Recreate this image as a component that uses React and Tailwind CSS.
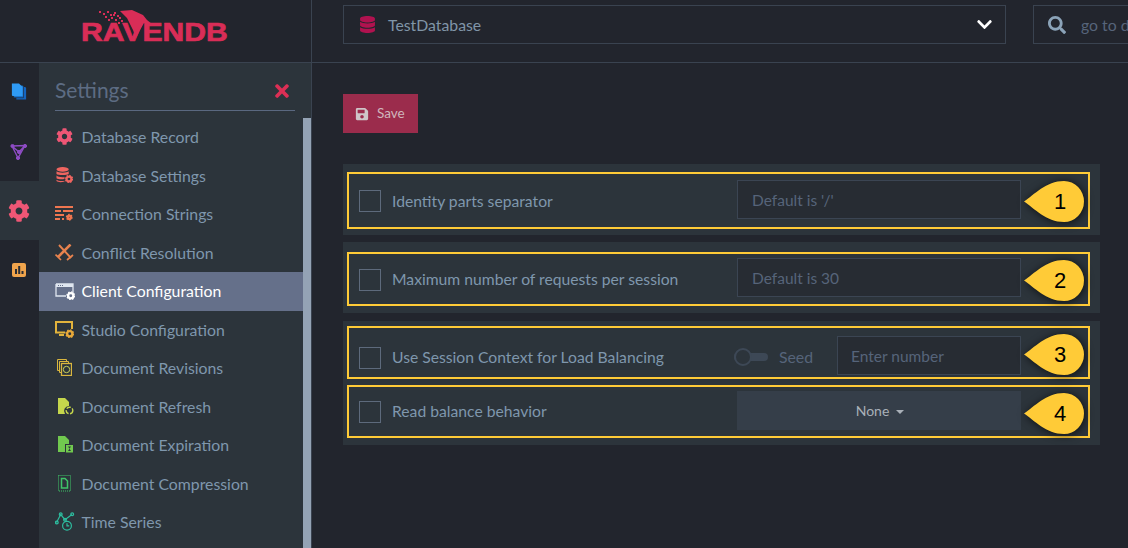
import { FaChevronDown, FaCog, FaDatabase, FaSave, FaSearch, FaTimes } from "react-icons/fa";

function Logo() {
  return (
    <svg width="150" height="36" viewBox="0 0 150 36" fill="#d92d57" className="overflow-visible">
      <path d="M41 3 L53 2 L64 7 L68 12 L73 16 L65 15 L61 22 L57 30 L54 22 L48 10 Z" />
      {[[20,3],[24,5],[28,3],[31,6],[35,4],[38,7],[26,8],[32,9],[36,11],[40,9],[42,12],[39,14],[44,15],[34,6],[29,11]].map(([x, y]) => (
        <rect key={`${x}-${y}`} x={x} y={y} width="2" height="2" />
      ))}
      <text x="1.8" y="33" transform="scale(1.16 1)" fontFamily="'Liberation Sans', sans-serif" fontWeight="700" fontSize="26" stroke="#d92d57" strokeWidth="0.7">
        RAVENDB
      </text>
    </svg>
  );
}

function DocsIcon() {
  return (
    <svg width="16" height="19" viewBox="0 0 18 20" className="mb-[3px]">
      <path d="M6 5h10l1 1v13H6z" fill="#1565c0" />
      <path d="M3 3h10l1 1v13H3z" fill="#1976d2" stroke="#22252d" strokeWidth="0.7" />
      <path d="M1 1h8l4 4v10H2a1 1 0 0 1-1-1z" fill="#2f9bf5" />
    </svg>
  );
}

function VectorIcon() {
  return (
    <svg width="17" height="16" viewBox="0 0 17 16" fill="#8e4cc4" stroke="#8e4cc4">
      <path d="M2 2 L15 1.5 L8 14 Z M2 2 L9 8 L15 1.5" fill="none" strokeWidth="1.4" />
      <circle cx="2.5" cy="2" r="1.6" />
      <circle cx="15" cy="2" r="1.6" />
      <circle cx="8" cy="14" r="1.6" />
      <circle cx="9" cy="8" r="1.6" />
    </svg>
  );
}

function StatsIcon() {
  return (
    <svg width="14" height="14" viewBox="0 0 14 14">
      <rect width="14" height="14" rx="2" fill="#f0a44c" />
      <path d="M3 6h2v5H3zM6.2 3h2v8h-2zM9.5 8h2v3h-2z" fill="#2a2d33" />
    </svg>
  );
}

function TinyGear({ x, y, size, color }) {
  return (
    <g transform={`translate(${x} ${y})`}>
      <circle cx={size / 2} cy={size / 2} r={size / 2 - 1.6} fill="none" stroke={color} strokeWidth="2.4" />
      <circle cx={size / 2} cy={size / 2} r={size / 2 - 0.4} fill="none" stroke={color} strokeWidth="1.2" strokeDasharray="1.5 1.5" />
    </g>
  );
}

function DbSettingsIcon() {
  return (
    <svg width="17" height="16" viewBox="0 0 18 17" fill="#ef6560">
      <ellipse cx="7" cy="2.5" rx="6.5" ry="2.5" />
      <path d="M.5 4.5C2 6.5 12 6.5 13.5 4.5V7.5C12 9 2 9 .5 7.5ZM.5 9C2 11 8 11 9 10.5V12.5C7 13.5 2 13 .5 12ZM.5 13.5C2 15 7 15 9 14.5V15.5C6 16.5 2 16.5.5 15Z" />
      <TinyGear x={9.5} y={8.5} size={8.5} color="#ef6560" />
    </svg>
  );
}

function ConnectionIcon() {
  return (
    <svg width="18" height="15" viewBox="0 0 18 15" fill="#ef7650">
      <path d="M0 0h18v2H0zM0 4h6v2H0zM8 4h10v2H8zM0 8h9v2H0zM0 12h5v2H0zM7 12h2v2H7z" />
      <TinyGear x={11} y={8} size={6.5} color="#ef7650" />
    </svg>
  );
}

function ConflictIcon() {
  return (
    <svg width="19" height="17" viewBox="0 0 19 17" fill="none" stroke="#e8834e" strokeWidth="1.5">
      <path d="M15.5 0.5 L3 13" strokeWidth="2.6" />
      <path d="M4 1 L16 14" strokeWidth="1.9" />
      <path d="M0.5 10.5 L6 16 M12 16 L18 11" strokeWidth="1.7" />
    </svg>
  );
}

function ClientIcon() {
  return (
    <svg width="20" height="17" viewBox="0 0 20 17" fill="none">
      <path d="M1 1h17v9M1 1v12h10" stroke="#dfe6f0" strokeWidth="1.3" />
      <path d="M1 1h17v3H1z" fill="#dfe6f0" />
      <path d="M3 2h1v1H3zM5 2h1v1H5zM7 2h1v1H7z" fill="#65708a" />
      <TinyGear x={11.5} y={8.5} size={8.5} color="#ffffff" />
    </svg>
  );
}

function StudioIcon() {
  return (
    <svg width="19" height="17" viewBox="0 0 19 17" fill="none">
      <path d="M10 11.5H1V1h16v7" stroke="#e2b33c" strokeWidth="2" />
      <path d="M4 13h5v2H4z" fill="#e2b33c" />
      <TinyGear x={10.5} y={8.5} size={8.5} color="#e8a93a" />
    </svg>
  );
}

function RevisionsIcon() {
  return (
    <svg width="15" height="17" viewBox="0 0 15 17" fill="none" stroke="#d9b63f" strokeWidth="1">
      <path d="M.5.5h9v2M.5.5v11h2M2.5 2.5h9v2M2.5 2.5v11h2" />
      <rect x="4.5" y="4.5" width="10" height="12" strokeWidth="1.3" />
      <circle cx="9.5" cy="10.5" r="3.2" stroke="#c9cf58" />
    </svg>
  );
}

function RefreshIcon() {
  return (
    <svg width="16" height="17" viewBox="0 0 16 17">
      <path d="M0 0h7l4 4v4a5 5 0 0 0-4 8H0z" fill="#c5d64c" />
      <circle cx="11.5" cy="12.5" r="3.3" fill="none" stroke="#c5d64c" strokeWidth="1.4" strokeDasharray="4.5 1.5" />
    </svg>
  );
}

function ExpirationIcon() {
  return (
    <svg width="15" height="17" viewBox="0 0 15 17">
      <path d="M0 0h7l4 4v4H7v8H0z" fill="#71c94f" />
      <path d="M8 9h7v7.5H8z" fill="#71c94f" />
      <path d="M10 10.5h3l-1.5 2.2 1.5 2.3h-3l1.5-2.3z" fill="#2c343b" />
    </svg>
  );
}

function CompressionIcon() {
  return (
    <svg width="13" height="17" viewBox="0 0 13 17" fill="none" stroke="#3fc468">
      <rect x="0.5" y="0.5" width="12" height="15.5" strokeDasharray="1 1" />
      <path d="M3.5 3.5h3.5l2.5 2.5v7h-6z" strokeWidth="1.5" />
    </svg>
  );
}

function SeriesIcon() {
  return (
    <svg width="20" height="19" viewBox="0 0 20 19" fill="none" stroke="#2dbd9f" strokeWidth="1.2">
      <path d="M1.5 10.5 L5.7 2.5 L10 7.7 L17 2.5" />
      <circle cx="1.8" cy="10.5" r="1.4" />
      <circle cx="5.7" cy="2.2" r="1.4" />
      <circle cx="10" cy="7.7" r="1.4" />
      <circle cx="17.2" cy="2.2" r="1.4" />
      <circle cx="12" cy="13.7" r="4.4" />
      <path d="M12 11.2v2.7h2.2" />
    </svg>
  );
}

const menu = [
  { label: "Database Record", icon: <FaCog className="ml-[1px] text-[17px] text-[#ef5675]" /> },
  { label: "Database Settings", icon: <span className="ml-[1px] flex"><DbSettingsIcon /></span> },
  { label: "Connection Strings", icon: <ConnectionIcon /> },
  { label: "Conflict Resolution", icon: <ConflictIcon /> },
  { label: "Client Configuration", icon: <ClientIcon />, active: true },
  { label: "Studio Configuration", icon: <StudioIcon /> },
  { label: "Document Revisions", icon: <span className="ml-[2px] flex"><RevisionsIcon /></span> },
  { label: "Document Refresh", icon: <span className="ml-[3px] flex"><RefreshIcon /></span> },
  { label: "Document Expiration", icon: <span className="ml-[3px] flex"><ExpirationIcon /></span> },
  { label: "Document Compression", icon: <span className="ml-[3px] flex"><CompressionIcon /></span> },
  { label: "Time Series", icon: <SeriesIcon /> },
];

function Callout({ n, className }) {
  return (
    <div className={`relative ml-[3px] h-[41px] w-[60px] shrink-0 ${className}`}>
      <svg width="60" height="41" viewBox="0 0 60 41" className="drop-shadow-[1px_1px_4px_rgba(0,0,0,0.7)]">
        <path d="M0 20.5 C10 14 22 0 40 0 A20 20.5 0 0 1 40 41 C22 41 10 27 0 20.5 Z" fill="#ffcb37" />
      </svg>
      <span className="absolute inset-0 flex items-center justify-center pl-[12px] font-['Liberation_Sans',sans-serif] text-[22px] text-black">
        {n}
      </span>
    </div>
  );
}

function TextBox({ placeholder, className }) {
  return (
    <div className={`flex h-[39px] items-center border border-[#3b4553] bg-[#272c33] pt-[2px] text-[15.5px] text-[#56647a] ${className}`}>
      {placeholder}
    </div>
  );
}

function Row({ label, n, boxClass, checkClass, labelClass, calloutClass, children }) {
  return (
    <div className={`mr-[6px] flex items-center border-2 border-[#ffcb37] pl-[10px] ${boxClass}`}>
      <span className={`h-[22px] w-[22px] shrink-0 border border-[#5d6a7c] ${checkClass}`} />
      <span className={`ml-[11px] flex-1 text-[15.7px] text-[#7f97ad] ${labelClass}`}>{label}</span>
      {children}
      <Callout n={n} className={calloutClass} />
      <span className="w-[4px] shrink-0" />
    </div>
  );
}

export default function App() {
  return (
    <div className="flex h-[548px] w-[1128px] flex-col overflow-hidden bg-[#22252d] font-['Lato',sans-serif]">
      <header className="flex h-[63px] shrink-0 border-b border-[#3a4350]">
        <div className="flex w-[312px] shrink-0 items-center justify-center border-r border-[#3a4350] pb-[10px] pr-[3px]">
          <Logo />
        </div>
        <div className="flex flex-1 items-start gap-[27px] pl-[31px] pt-[5px]">
          <div className="flex h-[39px] w-[663px] shrink-0 items-center border border-[#3a4350] pl-[15px] pr-[12px] text-[15.8px] text-[#8095a8]">
            <FaDatabase className="text-[17px] text-[#b0124f]" />
            <span className="ml-[12px] flex-1">TestDatabase</span>
            <FaChevronDown className="text-[17px] text-white" />
          </div>
          <div className="flex h-[39px] flex-1 items-center overflow-hidden whitespace-nowrap border border-r-0 border-[#3a4350] pl-[14px] text-[15.8px] text-[#56647a]">
            <FaSearch className="shrink-0 text-[18px] text-[#8ba3b8]" />
            <span className="ml-[15px]">go to document</span>
          </div>
        </div>
      </header>

      <div className="flex min-h-0 flex-1">
        <nav className="w-[39px] shrink-0">
          <div className="flex h-[59px] items-center justify-center pr-[2px] pt-[1px]"><DocsIcon /></div>
          <div className="flex h-[59px] items-center justify-center pr-[2px] pt-[1px]"><VectorIcon /></div>
          <div className="flex h-[59px] items-center justify-center bg-[#2c343b] pr-[2px] pt-[1px]">
            <FaCog className="text-[22px] text-[#ef5675]" />
          </div>
          <div className="flex h-[59px] items-center justify-center pr-[2px] pt-[1px]"><StatsIcon /></div>
        </nav>

        <aside className="flex w-[273px] shrink-0 flex-col border-r border-[#3a4350] bg-[#2c343b]">
          <div className="mx-[16px] flex h-[48px] shrink-0 items-center justify-between border-b border-[#5a6880] pr-[3px] pt-[7px]">
            <span className="text-[21px] text-[#5d6c83]">Settings</span>
            <FaTimes className="mt-[2px] text-[20px] text-[#dc2f55]" />
          </div>
          <div className="flex min-h-0 flex-1">
            <ul className="flex-1 pt-[6.7px]">
              {menu.map((item) => (
                <li
                  key={item.label}
                  className={`flex items-center pl-[16px] text-[15.8px] ${item.active ? "mb-[-0.5px] h-[39px] bg-[#65708a] text-white" : "h-[38.5px] text-[#7f97ad]"}`}
                >
                  <span className="flex w-[26.5px] shrink-0 items-center">{item.icon}</span>
                  {item.label}
                </li>
              ))}
            </ul>
            <div className="mt-[7px] w-[8px] shrink-0 bg-[#94a3b5]" />
          </div>
        </aside>

        <main className="flex-1 pl-[31px] pt-[31px]">
          <button className="flex h-[39px] w-[75px] items-center bg-[#9b2c4c] pl-[12px] text-[13.5px] text-[#d0b5bc]">
            <FaSave className="text-[14px] text-[#cfc5c8]" />
            <span className="ml-[8px]">Save</span>
          </button>

          <section className="mt-[31px] h-[71px] w-[757px] bg-[#2c343b] px-[4px] pt-[8px]">
            <Row label="Identity parts separator" n={1} boxClass="h-[57px]" checkClass="mt-[1px]" labelClass="mt-[2px]" calloutClass="mt-[2px]">
              <TextBox placeholder="Default is '/'" className="mb-[2px] w-[284px] px-[14px]" />
            </Row>
          </section>

          <section className="mt-[7px] h-[71px] w-[757px] bg-[#2c343b] px-[4px] pt-[10px]">
            <Row label="Maximum number of requests per session" n={2} boxClass="h-[54px]" checkClass="mt-[1px]" labelClass="mt-[1px]" calloutClass="mt-[2px]">
              <TextBox placeholder="Default is 30" className="mb-[3px] w-[284px] px-[14px]" />
            </Row>
          </section>

          <section className="mt-[8px] flex h-[124px] w-[757px] flex-col gap-[6px] bg-[#2c343b] px-[4px] pt-[5px]">
            <Row label="Use Session Context for Load Balancing" n={3} boxClass="h-[53px]" checkClass="mt-[10px]" labelClass="mt-[11px]" calloutClass="mt-[4px]">
              <div className="mr-[24px] mt-[8px] flex items-center text-[15.8px] text-[#56647a]">
                <span className="relative block h-[8px] w-[34px] rounded-full bg-[#3d4856]">
                  <span className="absolute left-0 top-[-5px] h-[18px] w-[18px] rounded-full border-2 border-[#3d4856] bg-[#2c343b]" />
                </span>
                <span className="ml-[11px]">Seed</span>
              </div>
              <TextBox placeholder="Enter number" className="mt-[6px] w-[184px] px-[13px]" />
            </Row>
            <Row label="Read balance behavior" n={4} boxClass="h-[53px]" checkClass="mt-[1px]" labelClass="mt-[1px]" calloutClass="mt-[4px]">
              <div className="mb-[2px] flex h-[39px] w-[284px] items-center justify-center gap-[7px] bg-[#353e49] pl-[2px] text-[14px] text-[#a9b0b8]">
                None
                <span className="mt-[2px] border-x-[4px] border-t-[4px] border-x-transparent border-t-[#a9b0b8]" />
              </div>
            </Row>
          </section>
        </main>
      </div>
    </div>
  );
}
